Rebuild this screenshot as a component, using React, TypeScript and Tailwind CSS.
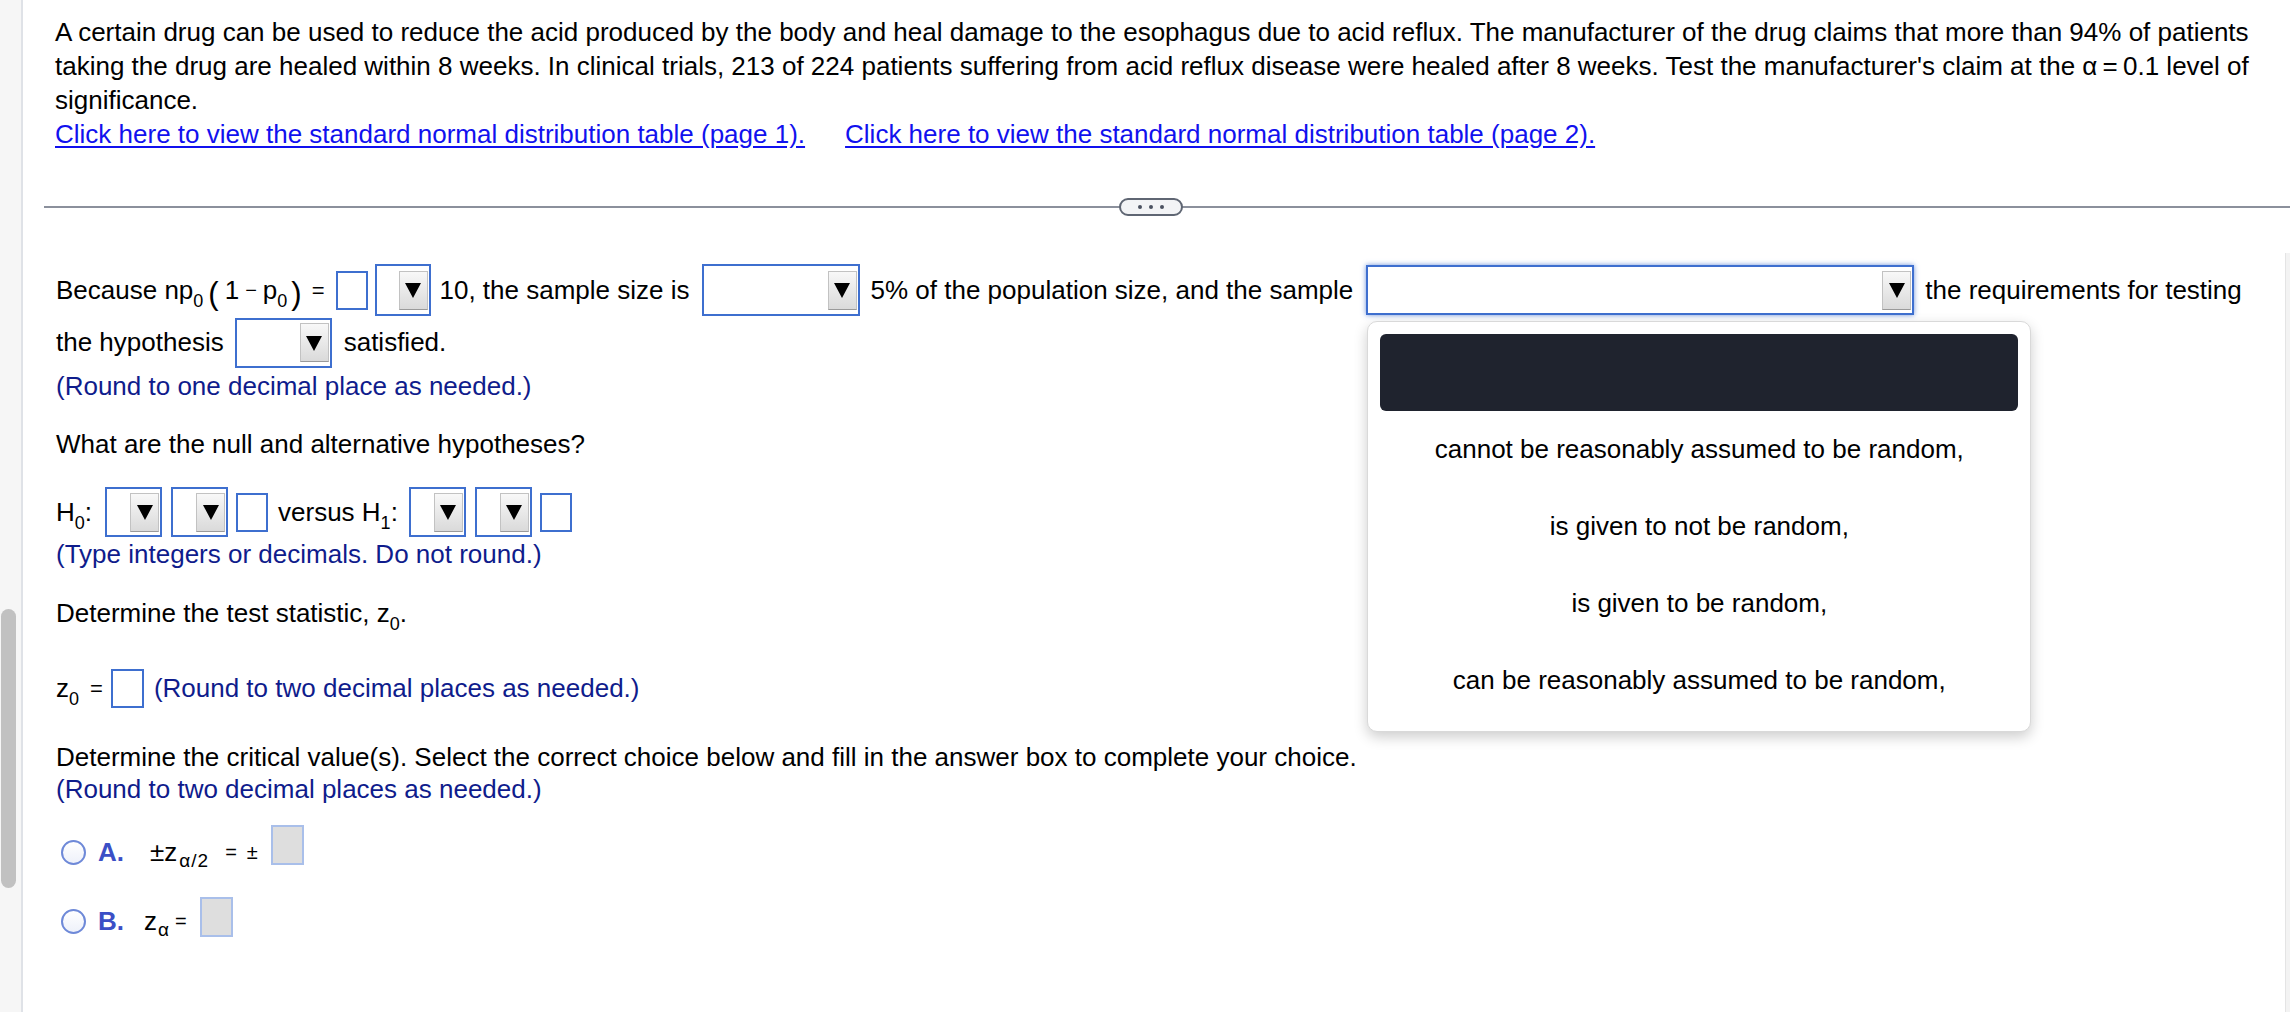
import React from "react";

const Sub = ({ children }: { children: React.ReactNode }) => (
  <span className="relative top-[8px] text-[18px] leading-none">{children}</span>
);

const Arrow = () => (
  <div className="flex h-[39px] w-[29px] items-center justify-center border border-[#c2c2c2] border-b-[#9a9a9a] bg-linear-to-b from-[#f8f8f8] to-[#dadada]">
    <svg width="16" height="16" viewBox="0 0 16 16">
      <path d="M0 1h16L8 16z" fill="#000" />
    </svg>
  </div>
);

function Select({ className, children }: { className: string; children?: React.ReactNode }) {
  return (
    <div className={`relative flex shrink-0 items-center justify-end border-2 border-[#3e6fcf] bg-white pr-px ${className}`}>
      <Arrow />
      {children}
    </div>
  );
}

const Box = ({ className = "" }: { className?: string }) => (
  <div className={`h-[39px] w-[32px] shrink-0 border-2 border-[#3e6fcf] bg-white ${className}`} />
);

const GrayBox = ({ className = "" }: { className?: string }) => (
  <div className={`h-[40px] w-[33px] shrink-0 border-2 border-[#a9bfea] bg-[#dedede] ${className}`} />
);

const Radio = () => (
  <div className="ml-[5px] h-[25px] w-[25px] shrink-0 rounded-full border-2 border-[#6e89d8] bg-linear-to-b from-white to-[#eef1fa]" />
);

const options = [
  "cannot be reasonably assumed to be random,",
  "is given to not be random,",
  "is given to be random,",
  "can be reasonably assumed to be random,",
];

export default function App() {
  return (
    <div className="flex h-[1012px] w-[2290px] overflow-hidden bg-white font-['Liberation_Sans',Arial,Helvetica,sans-serif] text-[26px] text-black">
      {/* left rail with scrollbar */}
      <aside className="w-[23px] shrink-0 border-r-2 border-[#dfe2e7] bg-[#f6f6f6] pt-[609px]">
        <div className="ml-px h-[279px] w-[15px] rounded-full bg-[#c1c1c1]" />
      </aside>

      <main className="flex min-w-0 flex-1 flex-col">
        <div className="whitespace-nowrap pl-[32px] pt-[15px] leading-[34px]">
          A certain drug can be used to reduce the acid produced by the body and heal damage to the esophagus due to acid reflux. The manufacturer of the drug claims that more than 94% of patients
          <br />
          taking the drug are healed within 8 weeks. In clinical trials, 213 of 224 patients suffering from acid reflux disease were healed after 8 weeks. Test the manufacturer's claim at the α{"\u2009"}={"\u2009"}0.1 level of
          <br />
          significance.
          <br />
          <a href="#" className="text-[#1111ee] underline underline-offset-[3px]">
            Click here to view the standard normal distribution table (page 1).
          </a>
          <a href="#" className="ml-[40px] text-[#1111ee] underline underline-offset-[3px]">
            Click here to view the standard normal distribution table (page 2).
          </a>
        </div>

        {/* separator */}
        <div className="relative ml-[21px] mt-[55px] h-[2px] bg-[#8b909c]">
          <div className="absolute left-[1075px] top-1/2 flex h-[18px] w-[64px] -translate-y-1/2 items-center justify-center gap-[7px] rounded-full border-2 border-[#5f6673] bg-[#f3f4f6]">
            <span className="h-[4px] w-[4px] rounded-full bg-[#4b5160]" />
            <span className="h-[4px] w-[4px] rounded-full bg-[#4b5160]" />
            <span className="h-[4px] w-[4px] rounded-full bg-[#4b5160]" />
          </div>
        </div>

        <div className="flex flex-1">
          <div className="flex min-w-0 flex-1 flex-col pl-[33px]">
            {/* row 1 */}
            <div className="mt-[56px] flex h-[52px] items-center whitespace-nowrap">
              <span>
                Because np<Sub>0</Sub>
              </span>
              <span className="relative top-[3px] ml-[5px] text-[31px] font-light leading-none">(</span>
              <span className="ml-[6px]">1</span>
              <span className="ml-[6px] text-[20px]">−</span>
              <span className="ml-[6px]">
                p<Sub>0</Sub>
              </span>
              <span className="relative top-[3px] ml-[4px] text-[31px] font-light leading-none">)</span>
              <span className="ml-[10px] text-[22px]">=</span>
              <Box className="ml-[11px]" />
              <Select className="ml-[7px] h-[52px] w-[56px]" />
              <span className="ml-[9px]">10, the sample size is</span>
              <Select className="ml-[12px] h-[52px] w-[158px]" />
              <span className="ml-[11px]">5% of the population size, and the sample</span>
              <Select className="ml-[13px] h-[50px] w-[548px] shadow-[0_0_5px_rgba(62,111,207,0.75)]">
                <div className="absolute left-[-1px] top-[54px] z-10 w-[664px] rounded-[10px] border border-[#d9d9d9] bg-white p-[12px] shadow-[0_5px_14px_rgba(0,0,0,0.2)]">
                  <div className="h-[77px] rounded-[6px] bg-[#1f232e]" />
                  {options.map((o) => (
                    <div key={o} className="flex h-[77px] items-center justify-center">
                      {o}
                    </div>
                  ))}
                </div>
              </Select>
              <span className="ml-[11px]">the requirements for testing</span>
            </div>

            {/* row 2 */}
            <div className="flex h-[53px] items-center whitespace-nowrap">
              <span>the hypothesis</span>
              <Select className="ml-[11px] h-[50px] w-[97px]" />
              <span className="ml-[12px]">satisfied.</span>
            </div>
            <div className="leading-[34px] text-[#0f1c8c]">(Round to one decimal place as needed.)</div>

            <div className="mt-[24px] leading-[34px]">What are the null and alternative hypotheses?</div>

            {/* hypotheses */}
            <div className="mt-[26px] flex h-[50px] items-center whitespace-nowrap">
              <span>
                H<Sub>0</Sub>:
              </span>
              <Select className="ml-[13px] h-[50px] w-[57px]" />
              <Select className="ml-[9px] h-[50px] w-[57px]" />
              <Box className="ml-[8px] w-[31px]" />
              <span className="ml-[10px]">
                versus H<Sub>1</Sub>:
              </span>
              <Select className="ml-[11px] h-[50px] w-[57px]" />
              <Select className="ml-[9px] h-[50px] w-[57px]" />
              <Box className="ml-[8px]" />
            </div>
            <div className="leading-[34px] text-[#0f1c8c]">(Type integers or decimals. Do not round.)</div>

            <div className="mt-[25px] leading-[34px]">
              Determine the test statistic, z<Sub>0</Sub>.
            </div>

            <div className="mt-[38px] flex h-[40px] items-center whitespace-nowrap">
              <span>
                z<Sub>0</Sub>
              </span>
              <span className="ml-[11px] text-[22px]">=</span>
              <Box className="ml-[8px] w-[33px]" />
              <span className="ml-[10px] text-[#0f1c8c]">(Round to two decimal places as needed.)</span>
            </div>

            <div className="mt-[32px] leading-[34px]">
              Determine the critical value(s). Select the correct choice below and fill in the answer box to complete your choice.
            </div>
            <div className="leading-[30px] text-[#0f1c8c]">(Round to two decimal places as needed.)</div>

            {/* choice A */}
            <div className="mt-[26px] flex h-[44px] items-center whitespace-nowrap">
              <Radio />
              <span className="ml-[12px] font-bold text-[#3b4fc6]">A.</span>
              <span className="ml-[26px]">±z</span>
              <span className="relative top-[8px] ml-[2px] text-[19px] leading-none tracking-[1px]">α/2</span>
              <span className="ml-[16px] text-[20px]">=</span>
              <span className="ml-[10px] text-[20px]">±</span>
              <GrayBox className="mb-[14px] ml-[13px]" />
            </div>

            {/* choice B */}
            <div className="mt-[25px] flex h-[44px] items-center whitespace-nowrap">
              <Radio />
              <span className="ml-[12px] font-bold text-[#3b4fc6]">B.</span>
              <span className="ml-[20px]">z</span>
              <span className="relative top-[8px] ml-px text-[19px] leading-none">α</span>
              <span className="ml-[6px] text-[20px]">=</span>
              <GrayBox className="mb-[9px] ml-[13px]" />
            </div>
          </div>
          <div className="mt-[45px] w-[5px] shrink-0 border-l border-[#e4e4e4] bg-[#f3f3f3]" />
        </div>
      </main>
    </div>
  );
}
